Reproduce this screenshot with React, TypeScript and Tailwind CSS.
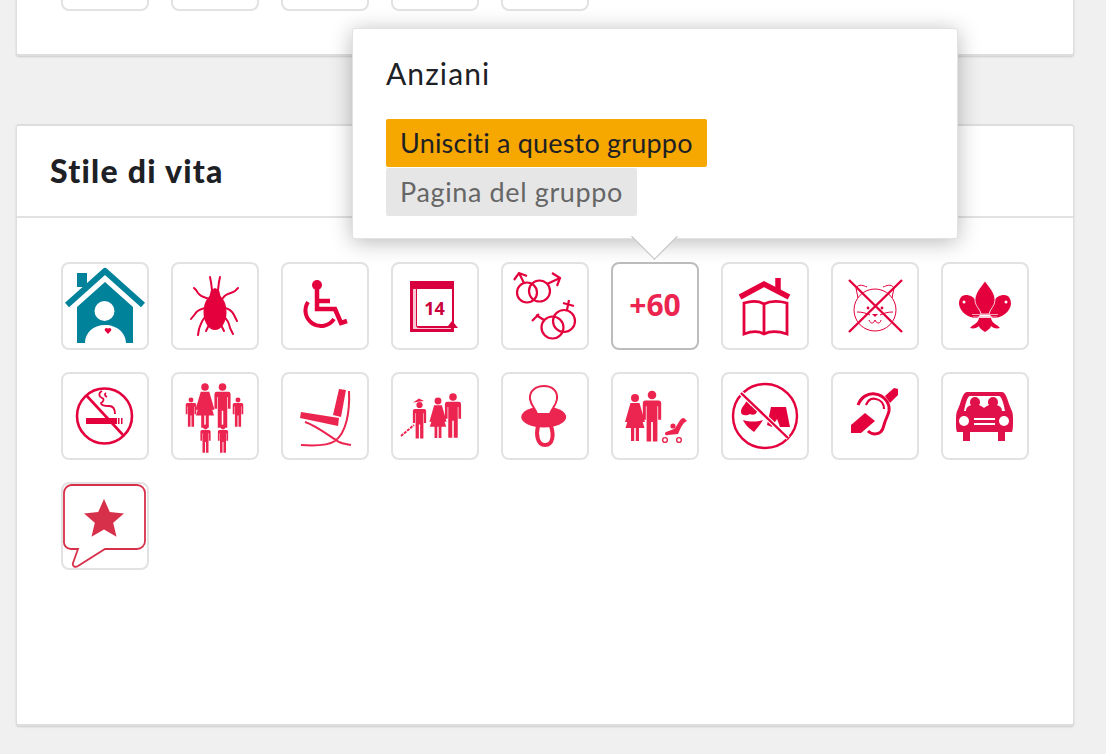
import type { ReactNode } from "react"

const RED = "#e4003d"
const PINK = "#ec2550"

function Man({ x, y, s = 1, fill = PINK }: { x: number; y: number; s?: number; fill?: string }) {
  return (
    <g transform={`translate(${x} ${y}) scale(${s})`} fill={fill}>
      <circle cx="0" cy="0" r="4" />
      <path d="M-6 5h12a2.500 2.500 0 0 1 2.500 2.500V23h-2.800V10.500H5V43H.8V25h-1.600v18H-5V10.500h-.7V23h-2.800V7.500A2.500 2.500 0 0 1-6 5z" />
    </g>
  )
}

function Woman({ x, y, s = 1, fill = PINK }: { x: number; y: number; s?: number; fill?: string }) {
  return (
    <g transform={`translate(${x} ${y}) scale(${s})`} fill={fill}>
      <circle cx="0" cy="0" r="4" />
      <path d="M-4.500 5h9l5.500 19h-2.500L5 15l4.500 15H4v13H.8V30H-.8v13H-4V30h-5.500L-5 15l-2.500 9H-10z" />
    </g>
  )
}

const icons: ReactNode[] = [
  // casa
  <>
    <rect x="16" y="11" width="10" height="14" fill="#00829b" />
    <path d="M16 81V45L44 20l28 25v36h-7c0-10-9-18-21-18s-20 8-20 18z" fill="#00829b" />
    <circle cx="43.500" cy="49" r="10" fill="#fff" />
    <path d="M6 43 44 9l38 34" fill="none" stroke="#00829b" strokeWidth="6" strokeLinejoin="round" />
    <path d="M47 72l-3-3.200a1.800 1.800 0 0 1 3-2 1.800 1.800 0 0 1 3 2z" fill={RED} />
  </>,
  // acaro
  <>
    <ellipse cx="44" cy="50" rx="11.500" ry="18" fill={RED} />
    <path d="M38 36l2-8 4-2 4 2 2 8z" fill={RED} />
    <g fill="none" stroke={RED} strokeWidth="2" strokeLinecap="round">
      <path d="M41 28l-1-8-1-5M47 28l1-8 1-5" />
      <path d="M36 36c-4-1-6-1-9-5l-2-3-2-2M52 36c3-5 8-4 12-7l3-3" />
      <path d="M34 46c-4 1-8 2-10 6l-4 5M54 46c5 1 7 3 9 7l3 6" />
      <path d="M36 53c-4 3-6 8-8 14l-1 6M52 54c4 3 6 6 7 12l3 6M38 63l-3 6M50 63l3 6" />
    </g>
  </>,
  // sedia a rotelle
  <>
    <circle cx="36" cy="23" r="5" fill={RED} />
    <path d="M36 26v21h18l6 14 6-2M36 39h13" fill="none" stroke={RED} strokeWidth="4.500" />
    <path d="M27 40a15 15 0 1 0 26 17" fill="none" stroke={RED} strokeWidth="4" />
  </>,
  // calendario
  <>
    <path d="M19 19h44v42l4 5h-4v4H19z" fill="#d9003f" />
    <path d="M22 27h3v36c0 2 1 3 3 3h32v1H22z" fill="#f9c6d4" />
    <path d="M26 27h35v32l-4 5H26z" fill="#fff" />
    <text x="43.500" y="53" textAnchor="middle" fontFamily="'Open Sans', sans-serif" fontWeight="700" fontSize="18" fill="#c9003c">14</text>
  </>,
  // generi
  <g fill="none" stroke={RED} strokeWidth="2.200">
    <circle cx="26" cy="30.500" r="10" />
    <circle cx="38.500" cy="29" r="10.500" />
    <path d="M23 21l-5-10M13 18l5-7 8 3M46 22l13-6M51 11l8 5-3 8" />
    <circle cx="51.500" cy="65.500" r="11" />
    <circle cx="63" cy="59" r="11" />
    <path d="M43 58l-8-5M31 59l7-7M66 48l2-10M62 41l11 3" />
  </g>,
  // +60
  <text x="44" y="54" textAnchor="middle" fontFamily="'Open Sans', sans-serif" fontWeight="700" fontSize="30" fill={PINK}>+60</text>,
  // casa libro
  <g fill="none" stroke={RED}>
    <path d="M19 35l24-13 25 13" strokeWidth="5.500" />
    <path d="M57 28V16" strokeWidth="5.500" />
    <path d="M23 41v31c8-3 15-3 20 0 6-3 14-3 23 0V41c-8-2-17-2-23 1-5-3-13-3-20-1zM43 42v30" strokeWidth="2.800" />
  </g>,
  // gatto
  <>
    <g fill="none" stroke={RED} strokeWidth="1">
      <circle cx="44" cy="48" r="21" />
      <path d="M27 36l-2-10c3-5 8-2 11-1M61 36l2-10c-3-5-8-2-11-1" />
      <path d="M26 50c5 0 9 1 13 3M62 50c-5 0-9 1-13 3M38 58c2 5 5 3 6 0 1 3 5 5 6 0" />
    </g>
    <circle cx="37" cy="46" r="1.400" fill={RED} />
    <circle cx="51" cy="46" r="1.400" fill={RED} />
    <path d="M41 52h6l-3 3z" fill={RED} />
    <path d="M18 18l53 52M71 18 18 70" stroke={RED} strokeWidth="2.400" />
  </>,
  // giglio scout
  <>
    <path d="M18 42c1 8 9 14 18 14l4-4-5-13c-2-4-6-6-10-6-5 0-7 4-7 9zM70 42c-1 8-9 14-18 14l-4-4 5-13c2-4 6-6 10-6 5 0 7 4 7 9z" fill={RED} />
    <path d="M44 19c5 7 10 12 10 19 0 6-5 9-6 14h-8c-1-5-6-8-6-14 0-7 5-12 10-19z" fill={RED} stroke="#fff" strokeWidth="0.800" />
    <path d="M29 66c3-4 8-4 9-10h12c1 6 6 6 9 10-4 1-7 0-9-2 0 2-3 4-6 6-3-2-6-4-6-6-2 2-5 3-9 2z" fill={RED} />
    <path d="M31 52.500h26M32 55h24" stroke="#f6a5b9" strokeWidth="1" />
    <circle cx="23" cy="40" r="1.500" fill="#fff" />
    <circle cx="65" cy="40" r="1.500" fill="#fff" />
  </>,
  // no fumo
  <>
    <circle cx="43.500" cy="44" r="27.500" fill="none" stroke={RED} strokeWidth="2.600" />
    <rect x="25" y="46" width="31" height="6" fill={RED} />
    <path d="M57 46h1.500v6H57zM60 46h1.500v6H60z" fill={RED} />
    <path d="M41 19c-4 2-3 6 0 7 3 1 1 4-1 5 0 3 6 3 8 3 4 0 6 3 6 8M45 21c-2 1-1 3 1 4" fill="none" stroke={RED} strokeWidth="1.800" />
    <path d="M25 23l37 40" stroke={RED} strokeWidth="2.600" />
  </>,
  // famiglia
  <>
    <Woman x={34} y={15} s={0.95} />
    <Man x={51.500} y={15} s={0.95} />
    <Man x={20} y={28} s={0.62} />
    <Man x={67} y={28} s={0.62} />
    <Man x={34.500} y={55} s={0.6} />
    <Man x={52} y={55} s={0.6} />
  </>,
  // poltrona
  <>
    <path d="M58 17l7 1-5 27-8-2z" fill={PINK} />
    <path d="M20 40l38 6-1 8-38-8z" fill={PINK} />
    <path d="M68 19c1 22-3 42-14 50-6 4-20 5-34 4M24 50c12 4 24 14 34 20 4 2 8 2 12 3" fill="none" stroke={PINK} strokeWidth="2" />
  </>,
  // famiglia con bastone
  <>
    <Man x={28.500} y={33} s={0.78} />
    <path d="M22 30.500l6-4 5 2.500z" fill={PINK} />
    <Woman x={47} y={29} s={0.86} />
    <Man x={62} y={25} s={0.95} />
    <path d="M10 64l13-11" stroke={PINK} strokeWidth="2" strokeDasharray="3 1" />
  </>,
  // ciuccio
  <>
    <ellipse cx="42.700" cy="45" rx="22.500" ry="10.500" fill={PINK} />
    <path d="M36 42c-1-5-6-8-7-15-1-8 6-13 14-13s14 5 13 13c-1 7-5 9-7 15z" fill="#fff" stroke={PINK} strokeWidth="2" />
    <path d="M37 54c-2 8-1 19 7 19s9-10 6-19" fill="none" stroke={PINK} strokeWidth="4" />
  </>,
  // coppia con passeggino
  <>
    <Woman x={24} y={26} s={1} />
    <Man x={41} y={23} s={1.08} />
    <path d="M73 46c-5 0-6 8-10 11l-8 3c-2 1-1 4 2 3l10-1c2-4 4-11 9-13z" fill={PINK} />
    <circle cx="62" cy="54" r="2.600" fill={PINK} />
    <circle cx="54" cy="68" r="2.400" fill="none" stroke={PINK} strokeWidth="1.400" />
    <circle cx="68" cy="68" r="2.400" fill="none" stroke={PINK} strokeWidth="1.400" />
  </>,
  // no bikini
  <>
    <circle cx="44" cy="44" r="32" fill="none" stroke={RED} strokeWidth="2.400" />
    <path d="M20 40c0-5 4-7 6-12l4 6c3-1 6 2 6 5 0 3-4 5-7 3-3 2-9 2-9-2z" fill={RED} />
    <path d="M22 48c7 2 13 2 20 0-3 5-6 8-9 12-4-3-9-7-11-12z" fill={RED} />
    <path d="M50 35h15l4 20h-10l-3-8-5 8-5-2z" fill={RED} />
    <path d="M20 21l47 45" stroke="#fff" strokeWidth="4.500" />
    <path d="M20 21l47 45" stroke={RED} strokeWidth="2.400" />
  </>,
  // orecchio
  <>
    <path d="M54 24l9-8 4 1v6l-8 8z" fill={RED} />
    <path d="M20 53l14-12 10 8-14 12H20z" fill={RED} />
    <path d="M27 33c3-8 10-12 17-11 9 1 15 9 14 17-1 5-4 9-5 14-1 5-4 9-9 9-3 0-5-1-7-3" fill="none" stroke={RED} strokeWidth="3" />
    <path d="M35 33c2-5 6-7 10-6 5 1 8 5 8 10" fill="none" stroke={RED} strokeWidth="2.200" />
  </>,
  // auto
  <>
    <path d="M26 20h35c3 0 5 5 7 12l2 5c2 3 2 7 2 12 0 4 0 9-1 11h-7v9h-7v-9H29v9h-7v-9h-6c-1-2-1-7-1-11 0-5 0-9 2-12l2-5c2-7 4-12 7-12z" fill="#e0104a" />
    <path d="M23 39c1-5 3-15 6-15h29c3 0 5 10 6 15z" fill="#fff" />
    <path d="M25 39c0-4 3-5 5-6-1-1-1-2-1-3a5 5 0 0 1 10 0c0 1 0 2-1 3 2 1 4 2 5 3 1-1 3-2 5-3-1-1-1-2-1-3a5 5 0 0 1 10 0c0 1 0 2-1 3 2 1 5 2 5 6z" fill="#e0104a" />
    <circle cx="23" cy="49" r="5" fill="#fff" />
    <circle cx="63" cy="49" r="5" fill="#fff" />
    <path d="M33 47h21M33 52h21" stroke="#fff" strokeWidth="1.800" />
  </>,
  // fumetto stella
  <>
    <path d="M10 3h66a8 8 0 0 1 8 8v48a8 8 0 0 1-8 8H44L17 84c-3 2-6 0-5-3l5-14h-7a7 7 0 0 1-7-8V11a8 8 0 0 1 7-8z" fill="#fff" stroke="#d7304a" strokeWidth="1.800" />
    <path d="M43 17l5.800 13 14.200 1.400-10.800 9.400 3.300 14L43 47.500 30.500 54.800l3.300-14L23 31.400 37.200 30z" fill="#d7304a" />
  </>,
]

function Tile({ children, active }: { children?: ReactNode; active?: boolean }) {
  return (
    <div className={`h-[88px] w-[88px] rounded-[8px] border-2 bg-white ${active ? "border-[#bdbdbd]" : "border-[#e2e2e2]"}`}>
      {children && (
        <svg viewBox="2 2 84 84" className="h-[84px] w-[84px]">
          {children}
        </svg>
      )}
    </div>
  )
}

export default function App() {
  return (
    <div className="relative h-[754px] w-[1106px] overflow-hidden bg-[#f0f0f0] px-4 font-['Lato',sans-serif] text-[#1d2125]">
      {/* Gruppo precedente, tagliato in alto */}
      <div className="-mt-[77px] mb-[68px] h-[133px] w-[1058px] rounded-[3px] border border-b-2 border-t-0 border-[#dedede] bg-white pl-[44px] shadow-[0_1px_2px_rgba(0,0,0,0.15)]">
        <div className="flex gap-[22px]">
          {[0, 1, 2, 3, 4].map((i) => (
            <Tile key={i} />
          ))}
        </div>
      </div>

      <div className="h-[602px] w-[1058px] rounded-[3px] border border-b-2 border-t-2 border-[#dedede] bg-white shadow-[0_1px_2px_rgba(0,0,0,0.15)]">
        <div className="flex h-[92px] items-center border-b-2 border-[#e2e2e2] pl-[33px]">
          <h2 className="text-[32px] font-black leading-none tracking-[1.25px]">Stile di vita</h2>
        </div>
        <div className="grid grid-cols-[repeat(9,88px)] gap-[22px] pl-[44px] pt-[44px]">
          {icons.map((icon, i) => (
            <Tile key={i} active={i === 5}>
              {icon}
            </Tile>
          ))}
        </div>
      </div>

      {/* Popover del gruppo */}
      <div className="absolute left-[352px] top-[28px] h-[211px] w-[606px] rounded-[3px] border border-[#e2e2e2] bg-white pl-[33px] pt-[26px] shadow-[0_3px_22px_rgba(0,0,0,0.28)]">
        <div className="absolute -bottom-[15px] left-[285px] h-[33px] w-[33px] rotate-45 border-b border-r border-[#bdbdbd] bg-white" />
        <div className="relative text-[30px] leading-[36px] tracking-[1.1px]">Anziani</div>
        <div className="relative mt-[28px] flex flex-col items-start gap-[1px] text-[27px] leading-[48px]">
          <a className="h-[48px] rounded-[2px] bg-[#f7a800] px-[14px] tracking-[0.2px]">Unisciti a questo gruppo</a>
          <a className="h-[48px] rounded-[2px] bg-[#e6e6e6] px-[14px] tracking-[0.63px] text-[#666666]">Pagina del gruppo</a>
        </div>
      </div>
    </div>
  )
}
